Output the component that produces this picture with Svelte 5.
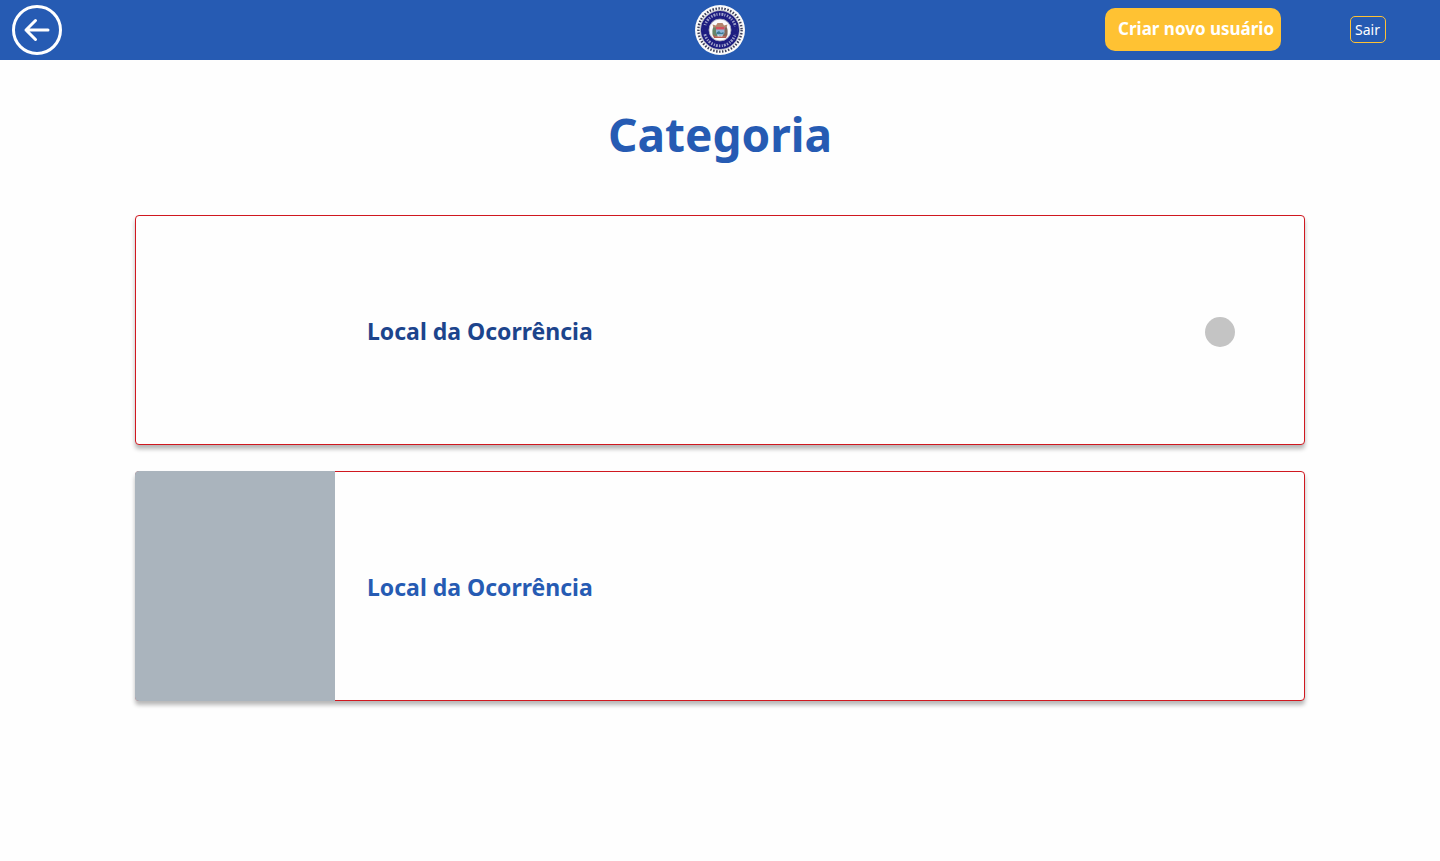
<script>
  const cards = [
    { id: 'local-1', title: 'Local da Ocorrência', filled: false, dark: true, marker: true },
    { id: 'local-2', title: 'Local da Ocorrência', filled: true, dark: false, marker: false }
  ];
</script>

<header class="topbar">
  <button class="back" type="button" aria-label="Voltar">
    <svg viewBox="0 0 50 50" width="50" height="50" fill="none" stroke="#fff" stroke-width="3" stroke-linecap="round" stroke-linejoin="round" aria-hidden="true">
      <circle cx="25" cy="25" r="23.5" />
      <path d="M36 25H14M23.500 15.500L14 25L23.500 34.500" />
    </svg>
  </button>

  <svg class="seal" viewBox="0 0 50 50" width="50" height="50" aria-hidden="true">
    <circle cx="25" cy="25" r="25" fill="#fafafa" />
    <circle cx="25" cy="25" r="21.600" fill="none" stroke="#3c3e58" stroke-width="2.400" stroke-dasharray="1.500 1.515" />
    <circle cx="25" cy="25" r="19.600" fill="none" stroke="#a5a7b4" stroke-width="0.800" />
    <circle cx="25" cy="25" r="15.100" fill="none" stroke="#1d1d80" stroke-width="8" />
    <circle cx="25" cy="25" r="15.800" fill="none" stroke="#9da0c8" stroke-width="2.800" stroke-dasharray="1.400 1.200 1.900 1 1.100 1.500" />
    <circle cx="25" cy="25" r="15.800" fill="none" stroke="#1d1d80" stroke-width="3.400" stroke-dasharray="9 40.637" stroke-dashoffset="4.500" />
    <circle cx="25" cy="25" r="11" fill="#fafafa" stroke="#9294b0" stroke-width="0.800" />
    <path d="M18.500 21.500Q16.500 26 18 31L22.500 32V21Z" fill="#688567" />
    <path d="M31.500 21.500Q33.500 26 32 31L27.500 32V21Z" fill="#80675a" />
    <path d="M17.500 19.500L21 20.500L22.500 18H27.500L29 20.500L32.500 19.500L31.500 22.500H18.500Z" fill="#b3846a" />
    <path d="M21 22H29.500V28Q28.500 30.500 25.200 31.500Q22 30.500 21 28Z" fill="#8fb6d8" />
    <path d="M21 22H29.500V24.500H21Z" fill="#d4505c" />
    <path d="M21.500 27.500L24 26L26 28L28.500 27V29H21.500Z" fill="#3e7a92" />
    <path d="M17.500 29.500L21 31.500H29L32.500 29.500L31 33H19Z" fill="#b55c50" />
  </svg>

  <nav class="actions" aria-label="Conta">
    <button class="create" type="button">Criar novo usuário</button>
    <button class="leave" type="button">Sair</button>
  </nav>
</header>

<main>
  <h1>Categoria</h1>
  <div class="list">
    {#each cards as card (card.id)}
      <article class="card" class:filled={card.filled}>
        <div class="thumb"></div>
        <h2 class:dark={card.dark}>{card.title}</h2>
        {#if card.marker}
          <span class="marker"></span>
        {/if}
      </article>
    {/each}
  </div>
</main>

<style>
  :global(body) {
    margin: 0;
    background: #fefefe;
    font-family: "Noto Sans", "Open Sans", sans-serif;
  }

  button {
    font-family: inherit;
    cursor: pointer;
  }

  .topbar {
    display: grid;
    grid-template-columns: 1fr auto 1fr;
    align-items: center;
    min-height: 60px;
    background: #265bb3;
  }

  .back {
    justify-self: start;
    margin-left: 12px;
    padding: 0;
    border: 0;
    border-radius: 50%;
    background: none;
  }

  .back svg,
  .seal {
    display: block;
  }

  .actions {
    display: flex;
    justify-content: flex-end;
    align-items: center;
    gap: 69px;
    padding: 0 54px 2px 0;
  }

  .create {
    height: 43px;
    padding: 0 7px 2px 13px;
    border: 0;
    border-radius: 10px;
    background: #ffc233;
    color: #fff;
    font-size: 17px;
    font-weight: 700;
    white-space: nowrap;
  }

  .leave {
    height: 27px;
    padding: 0 5px 0 4px;
    border: 1px solid #ffc233;
    border-radius: 5px;
    background: none;
    color: #fff;
    font-size: 14px;
  }

  main {
    max-width: 1170px;
    margin: 0 auto;
    padding: 39px 24px;
  }

  h1 {
    margin: 0 0 46px;
    color: #265bb3;
    font-size: 46px;
    line-height: 70px;
    font-weight: 700;
    text-align: center;
  }

  .list {
    display: grid;
    gap: 26px;
  }

  .card {
    display: flex;
    align-items: center;
    box-sizing: border-box;
    min-height: 230px;
    padding-right: 69px;
    border: 1px solid #d01820;
    border-radius: 4px;
    background: #fefefe;
    box-shadow: 0 4px 4px rgba(0, 0, 0, 0.28);
  }

  .thumb {
    flex: none;
    align-self: stretch;
    width: 200px;
    margin: -1px 0 -1px -1px;
    border-radius: 4px 0 0 4px;
  }

  .filled .thumb {
    background: #aab4bd;
  }

  h2 {
    flex: 1;
    margin: 2px 0 0 32px;
    color: #265bb3;
    font-size: 23px;
    line-height: 32px;
    font-weight: 700;
  }

  h2.dark {
    color: #1c448c;
  }

  .marker {
    flex: none;
    width: 30px;
    height: 30px;
    margin-top: 4px;
    border-radius: 50%;
    background: #c4c4c4;
  }
</style>
